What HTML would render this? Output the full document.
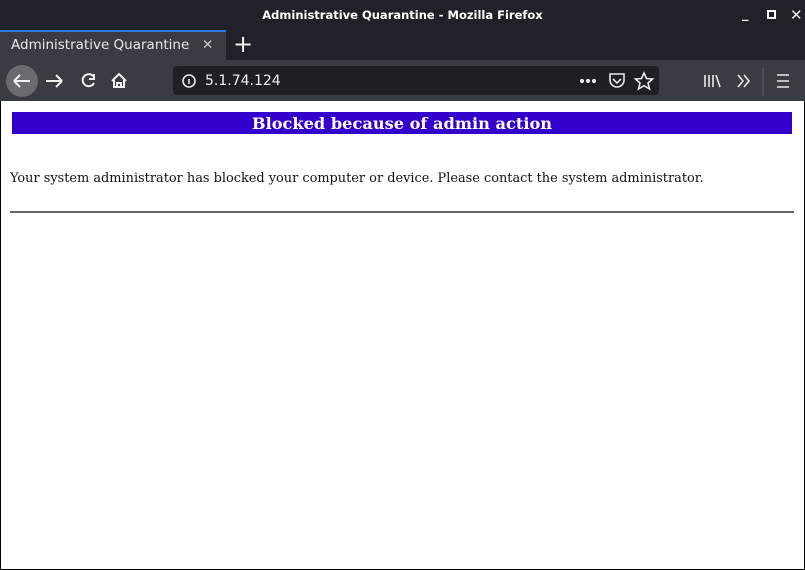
<!DOCTYPE html>
<html><head><style>
*{margin:0;padding:0;box-sizing:border-box}
body{width:805px;height:570px;overflow:hidden;background:#000;font-family:"DejaVu Sans","Liberation Sans",sans-serif;position:relative}
.title{position:absolute;left:0;top:0;width:805px;height:30px;background:#202229;color:#fff;font-size:11.5px;font-weight:bold;text-align:center;line-height:30px}
.tabs{position:absolute;left:0;top:30px;width:805px;height:30px;background:#202229}
.tab{position:absolute;left:0;top:0;width:226px;height:30px;background:#3a3c44;border-top:2px solid #2c7cf0;color:#e8e8ec;font-size:13.5px;line-height:27px;padding-left:11px}
.nav{position:absolute;left:0;top:60px;width:805px;height:41px;background:#3a3c44}
.url{position:absolute;left:173px;top:6px;width:486px;height:29px;background:#1f2026;border-radius:4px;color:#f0f0f0;font-size:14px;line-height:31px;padding-left:32px}
.page{position:absolute;left:1px;top:101px;width:803px;height:468px;background:#fff}
.ban{position:absolute;left:11px;top:11px;width:780px;height:22px;background:#3300cc;color:#fff;font:bold 16.2px "DejaVu Serif","Liberation Serif",serif;text-align:center;line-height:23px}
.p{position:absolute;left:9px;top:70px;font:12.9px "DejaVu Serif","Liberation Serif",serif;color:#111;white-space:nowrap}
.hr{position:absolute;left:9px;top:110px;width:784px;height:2px;background:#666}
.ic{position:absolute;color:#f0f0f0}
</style></head><body>
<div class="title">Administrative Quarantine - Mozilla Firefox</div>
<div class="ic" style="left:742px;top:7px;font-size:13px;font-weight:bold">_</div>
<div style="position:absolute;left:767px;top:10px;width:9px;height:9px;border:2px solid #fff"></div>
<div class="ic" style="left:790px;top:6px;font-size:15px;font-weight:bold">✕</div>
<div class="tabs"><div class="tab">Administrative Quarantine<span style="position:absolute;left:202px;color:#ccc">✕</span></div>
<div class="ic" style="left:233px;top:0;font-size:24px;line-height:28px">+</div></div>
<div class="nav">
<div style="position:absolute;left:6px;top:5px;width:32px;height:32px;border-radius:50%;background:#6a6b70"></div>
<svg style="position:absolute;left:0;top:0" width="140" height="41" fill="none" stroke="#f0f0f0" stroke-width="2">
<path d="M14 21h16M14 21l6-6M14 21l6 6"/>
<path d="M46 21h16M62 21l-6-6M62 21l-6 6"/>
<path d="M93 16a6 6 0 1 0 1 7M94 14v5h-5"/>
<path d="M112 21l7-7 7 7M114 20v7h10v-7M117 27v-4h4v4"/>
</svg>
<div class="url">5.1.74.124</div>
<svg style="position:absolute;left:0;top:0" width="805" height="41" fill="none" stroke="#e8e8e8" stroke-width="1.6">
<circle cx="189" cy="21" r="6"/><path d="M189 19v5"/>
<circle cx="582" cy="21" r="1.3" fill="#e8e8e8"/><circle cx="588" cy="21" r="1.3" fill="#e8e8e8"/><circle cx="594" cy="21" r="1.3" fill="#e8e8e8"/>
<path d="M610 14h14v6a7 7 0 0 1-14 0zM613 19l4 4 4-4"/>
<path d="M644 13l2.5 5.5 6 .5-4.5 4 1.5 6-5.5-3.3-5.5 3.3 1.5-6-4.5-4 6-.5z"/>
<path d="M705 15v12M709 15v12M713 15v12M716 15l4 12"/>
<path d="M738 15l5 6-5 6M744 15l5 6-5 6"/>
<path d="M763 8v28" stroke="#55565c"/>
<path d="M777 15h12M777 21h12M777 27h12"/>
</svg>
</div>
<div class="page">
<div class="ban">Blocked because of admin action</div>
<div class="p">Your system administrator has blocked your computer or device. Please contact the system administrator.</div>
<div class="hr"></div>
</div>
</body></html>
